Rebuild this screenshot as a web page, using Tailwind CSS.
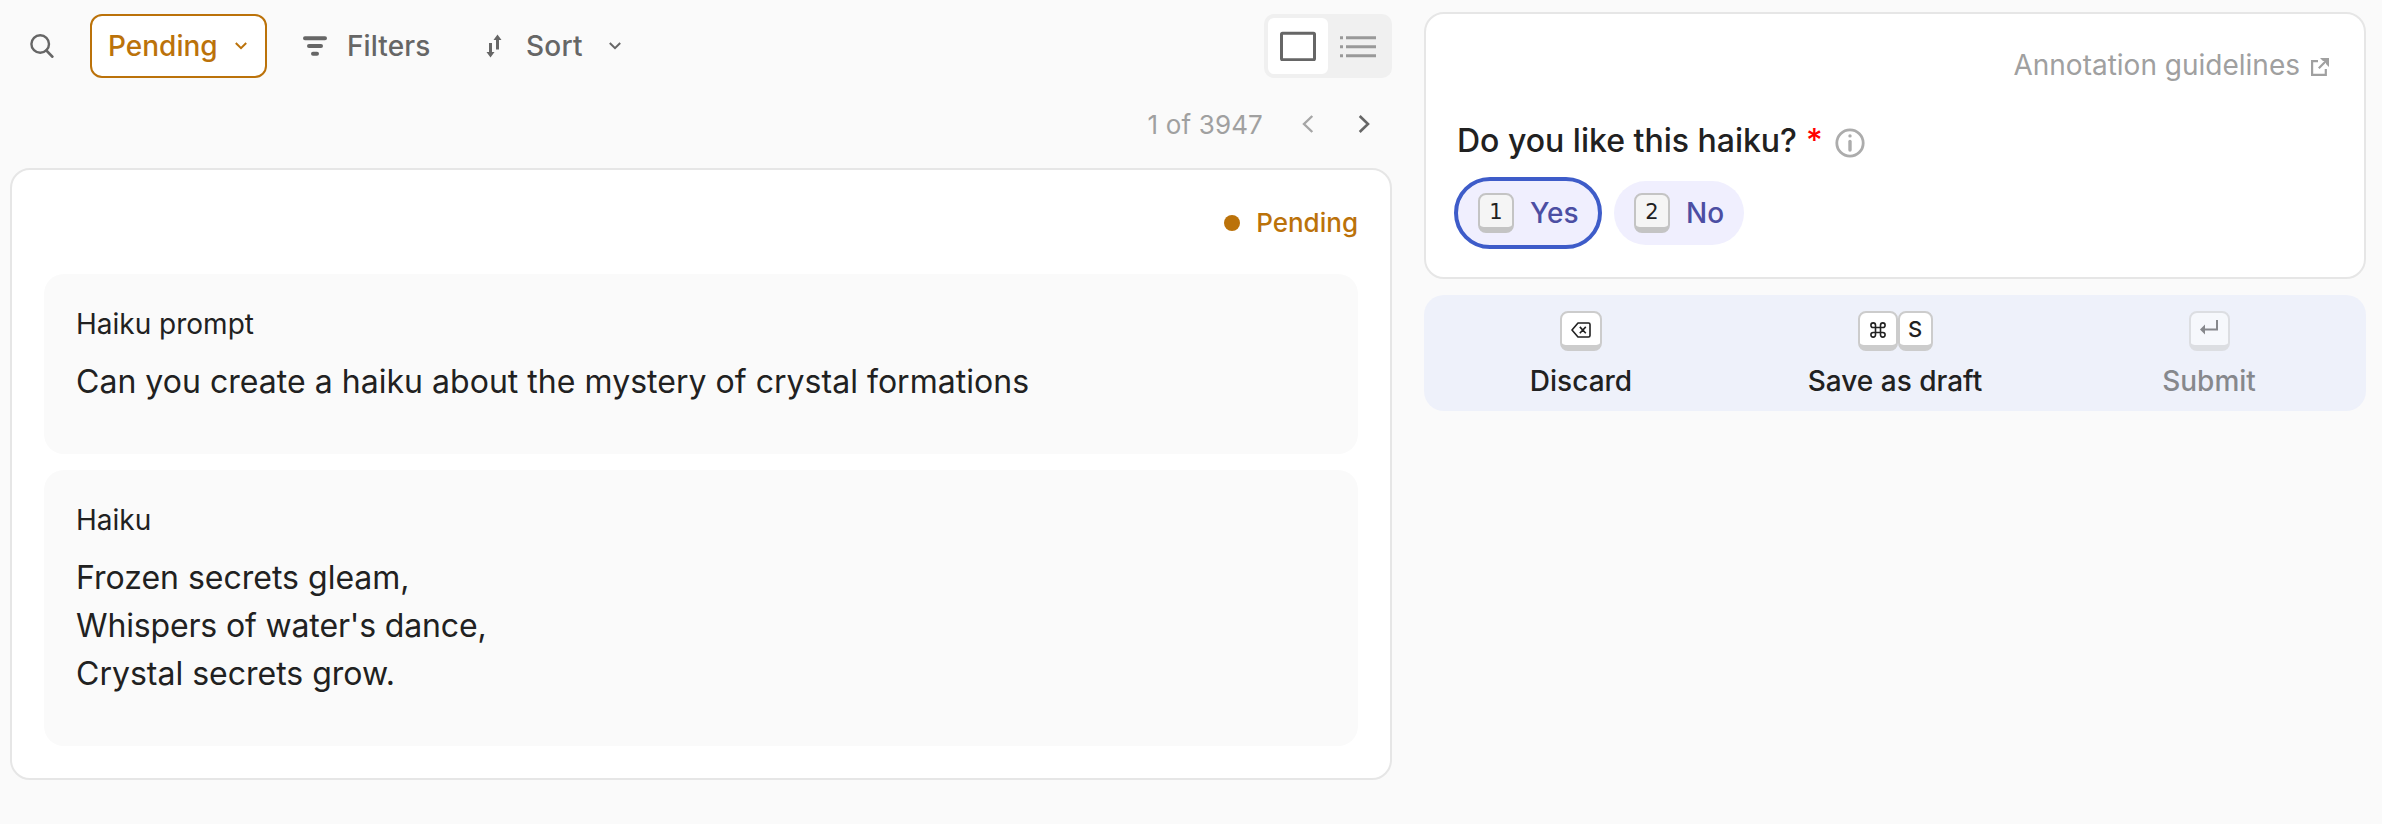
<!DOCTYPE html>
<html lang="en">
<head>
<meta charset="utf-8">
<title>Annotation</title>
<script src="https://cdn.jsdelivr.net/npm/@tailwindcss/browser@4"></script>
</head>
<body class="bg-[#fafafa] font-[Inter,sans-serif] text-[#212121]">
<div class="flex h-[824px] w-[2382px] gap-8 overflow-hidden pl-[10px] pr-4">
  <main class="flex w-[1382px] flex-col pt-[14px]">
    <div class="flex h-16 items-center text-[28px] font-medium text-[#666]">
      <svg class="ml-5 h-6 w-6 shrink-0" viewBox="0 0 24 24" fill="none" stroke="currentColor" stroke-width="2.4" stroke-linecap="round"><circle cx="10.2" cy="10" r="8.8"/><path d="M16.5 16.6 22.3 22.6" stroke-width="2.8"/></svg>
      <button class="ml-9 flex h-16 w-[177px] items-center justify-between rounded-xl border-2 border-[#bb720a] bg-white pl-4 pr-[18px] text-[#bb720a]"><span>Pending</span>
        <svg class="h-3 w-3" viewBox="0 0 12 12" fill="none" stroke="currentColor" stroke-width="2"><path d="M.8 3 6 8.2 11.2 3"/></svg>
      </button>
      <svg class="ml-9 h-5 w-6" viewBox="0 0 24 20" fill="none" stroke="currentColor" stroke-width="4" stroke-linecap="round"><path d="M2 2.2H22M6 10H18M10 17.8H14"/></svg>
      <span class="ml-5 w-[82px] tracking-[0.1px]">Filters</span>
      <svg class="ml-[57px] h-6 w-4" viewBox="0 0 16 24" fill="currentColor"><path d="M3 9H6V18H8.5L4.5 23.5 .5 18H3ZM10 15.5V6H7.5L11.5.5 15.5 6H13V15.5Z"/></svg>
      <span class="ml-6 w-[59px] tracking-[0.2px]">Sort</span>
      <svg class="ml-6 h-3 w-3" viewBox="0 0 12 12" fill="none" stroke="currentColor" stroke-width="2"><path d="M.8 3 6 8.2 11.2 3"/></svg>
      <div class="ml-auto flex h-16 w-32 rounded-[10px] bg-[#f0f0f0] p-1">
        <div class="flex h-14 w-[60px] items-center justify-center rounded-md bg-white"><svg class="h-[30px] w-9" viewBox="0 0 36 30" fill="none" stroke="#666" stroke-width="3"><rect x="1.5" y="2.3" width="33" height="26.4" rx="1"/></svg></div>
        <div class="flex h-14 w-[60px] items-center justify-center"><svg class="h-6 w-9" viewBox="0 0 36 24" fill="none" stroke="#999" stroke-width="3"><path d="M6 3.7H36M6 12.7H36M6 21.7H36M0 3.7H3M0 12.7H3M0 21.7H3"/></svg></div>
      </div>
    </div>
    <div class="flex h-[90px] items-center justify-end pt-[2px] text-[26px] text-[#a0a0a0]">
      <span class="tracking-[0.15px]">1 of 3947</span>
      <svg class="ml-[39px] h-[18px] w-3" viewBox="0 0 12 18" fill="none" stroke="#a6a6a6" stroke-width="2.4"><path d="M10.3 1 2 9 10.3 17"/></svg>
      <svg class="ml-11 mr-[22px] h-[18px] w-3" viewBox="0 0 12 18" fill="none" stroke="#666" stroke-width="2.6"><path d="M1.7 1 10 9 1.7 17"/></svg>
    </div>
    <section class="flex h-[612px] flex-col gap-4 rounded-[20px] border-2 border-[#e6e6e6] bg-white px-8 pb-8">
      <div class="-mb-4 flex h-[104px] items-center justify-end gap-4 text-[26px] font-medium text-[#bb720a]"><span class="mt-[2px] h-4 w-4 rounded-full bg-[#bb720a]"></span><span>Pending</span></div>
      <article class="h-[180px] rounded-[20px] bg-[#fafafa] px-8 pt-[33px]">
        <h2 class="text-[28px] leading-[34px]">Haiku prompt</h2>
        <p class="mt-[17px] text-[32px] leading-[48px] tracking-[0.03px]">Can you create a haiku about the mystery of crystal formations</p>
      </article>
      <article class="h-[276px] rounded-[20px] bg-[#fafafa] px-8 pt-[33px]">
        <h2 class="text-[28px] leading-[34px]">Haiku</h2>
        <p class="mt-[17px] text-[32px] leading-[48px]">Frozen secrets gleam,<br><span class="tracking-[-0.15px]">Whispers of water's dance,</span><br>Crystal secrets grow.</p>
      </article>
    </section>
  </main>
  <aside class="flex w-[942px] flex-col gap-4 pt-3">
    <section class="h-[267px] rounded-[20px] border-2 border-[#e6e6e6] bg-white px-8 pt-[34px]">
      <div class="flex h-[34px] items-center justify-end gap-[11px] pr-[3px] text-[28px] leading-[34px] text-[#a0a0a0]"><span>Annotation guidelines</span>
        <svg class="mt-1 h-[18px] w-[18px]" viewBox="0 0 18 18" fill="none" stroke="currentColor" stroke-width="2.2"><path d="M7 3.2H1.1V16.9H14.8V11M7.8 10.2 15 3"/><path d="M9 0H18V9L15 6V3H12Z" fill="currentColor" stroke="none"/></svg>
      </div>
      <div class="mt-[39px] flex h-10 items-center text-[32px] font-medium"><span class="-ml-px">Do you like this haiku?</span><span class="ml-[9px] text-[#f00]">*</span>
        <svg class="ml-3 mt-1 h-[30px] w-[30px]" viewBox="0 0 30 30" fill="none" stroke="#acacac" stroke-width="2.8"><circle cx="15" cy="15" r="13.2"/><path d="M15 13.5V22" stroke-width="3.4" stroke-linecap="round"/><circle cx="15" cy="7.9" r="1.7" fill="#acacac" stroke="none"/></svg>
      </div>
      <div class="mt-5 flex gap-4 text-[28px] font-medium text-[#4c4ea3]">
        <button class="flex h-16 w-[140px] items-center gap-4 rounded-full bg-[#f0effe] pl-5 outline-4 outline-[#3e5cc9]"><kbd class="h-10 w-9 rounded-lg border-2 border-b-[6px] border-[#c4c4c4] bg-[#f5f5f5] text-center font-['DejaVu_Sans',sans-serif] text-[21px] leading-[34px] font-normal text-[#212121]">1</kbd><span>Yes</span></button>
        <button class="flex h-16 w-[130px] items-center gap-4 rounded-full bg-[#f0effe] pl-5"><kbd class="h-10 w-9 rounded-lg border-2 border-b-[6px] border-[#c4c4c4] bg-[#f5f5f5] text-center font-['DejaVu_Sans',sans-serif] text-[21px] leading-[34px] font-normal text-[#212121]">2</kbd><span>No</span></button>
      </div>
    </section>
    <footer class="grid h-[116px] grid-cols-3 rounded-[20px] bg-[#eef1fa] pt-4 text-[28px] leading-[34px] font-medium">
      <div class="flex flex-col items-center gap-[13px]">
        <kbd class="flex h-10 w-[42px] items-center justify-center rounded-lg border-2 border-b-[6px] border-[#ccc] bg-white"><svg class="mt-[2px] h-4 w-5" viewBox="0 0 20 16" fill="none" stroke="currentColor" stroke-width="1.6" stroke-linejoin="round"><path d="M7 1H17.5Q19 1 19 2.5V13.5Q19 15 17.5 15H7L1 8ZM8.8 4.9 14.8 11.3M14.8 4.9 8.8 11.3"/></svg></kbd>
        <span>Discard</span>
      </div>
      <div class="flex flex-col items-center gap-[13px]">
        <div class="flex"><kbd class="flex h-10 w-10 items-center justify-center rounded-lg border-2 border-b-[6px] border-[#ccc] bg-white"><svg class="mt-[2px] h-4 w-4" viewBox="0 0 16 16" fill="none" stroke="currentColor" stroke-width="1.6"><path d="M5.5 5.5H10.5V10.5H5.5ZM5.5 5.5V3.2A2.3 2.3 0 1 0 3.2 5.5ZM10.5 5.5V3.2A2.3 2.3 0 1 1 12.8 5.5ZM5.5 10.5V12.8A2.3 2.3 0 1 1 3.2 10.5ZM10.5 10.5V12.8A2.3 2.3 0 1 0 12.8 10.5Z"/></svg></kbd><kbd class="h-10 w-[35px] rounded-lg border-2 border-b-[6px] border-[#ccc] bg-white text-center font-[Inter,sans-serif] text-[22px] leading-[33px]">S</kbd></div>
        <span>Save as draft</span>
      </div>
      <div class="flex flex-col items-center gap-[13px] opacity-50">
        <kbd class="flex h-10 w-[41px] items-center justify-center rounded-lg border-2 border-b-[6px] border-[#ccc] bg-white"><svg class="-mt-1 h-4 w-[18px]" viewBox="0 0 18 16" fill="none" stroke="currentColor" stroke-width="2"><path d="M17 1V10.5H4"/><path d="M0 10.5 5 5.5V15.5Z" fill="currentColor" stroke="none"/></svg></kbd>
        <span>Submit</span>
      </div>
    </footer>
  </aside>
</div>
</body>
</html>
